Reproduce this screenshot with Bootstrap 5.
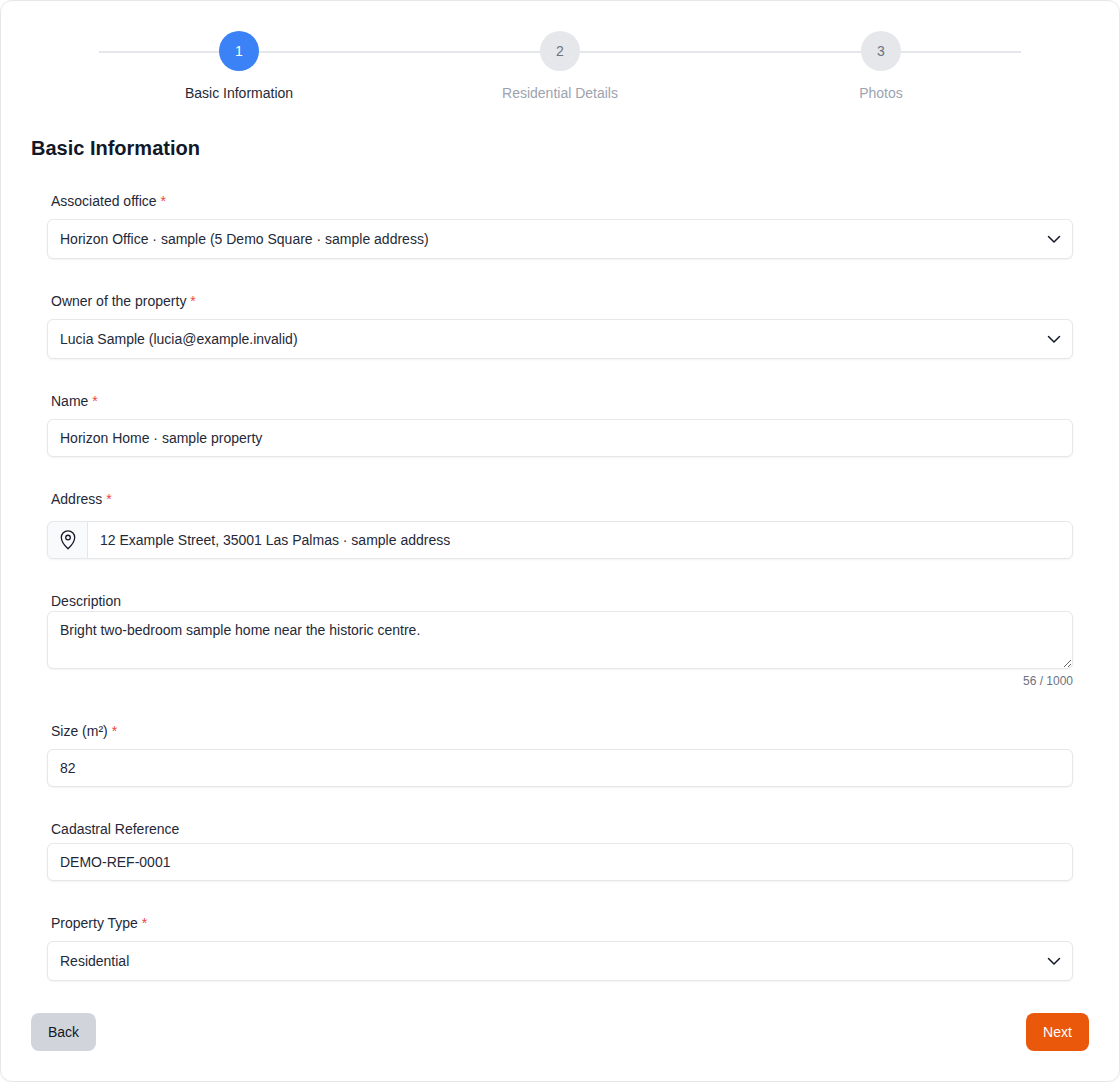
<!DOCTYPE html>
<html lang="en"><head><meta charset="utf-8">
<link href="https://cdn.jsdelivr.net/npm/bootstrap@5.3.0/dist/css/bootstrap.min.css" rel="stylesheet">
<script src="https://cdn.jsdelivr.net/npm/bootstrap@5.3.0/dist/js/bootstrap.bundle.min.js"></script>
<style>
body{background:#fff;font-family:"Liberation Sans",Arial,sans-serif;color:#111827;font-size:14px}
.shell{height:1082px;border:1px solid #e5e7eb;border-radius:12px;padding:30px 30px 30px;box-shadow:0 1px 2px rgba(0,0,0,.05)}
.stepper{position:relative;height:72px}
.stepline{position:absolute;left:68px;right:68px;top:20px;height:2px;background:#e5e7eb}
.stepcol{position:relative;width:321px}
.stepdot{width:40px;height:40px;border-radius:50%;background:#e5e7eb;color:#6b7280;font-size:14px}
.stepdot.active-dot{background:#3b82f6;color:#fff}
.steptxt{margin-top:12px;font-size:14px;line-height:20px;color:#9ca3af}
.steptxt.active-txt{color:#1f2937}
.ftitle{font-size:20px;font-weight:700;line-height:28px;margin:31px 0 29px;color:#111827}
.fbody{padding:0 16px;gap:32px}
.flabel{font-size:14px;line-height:20px;margin-left:4px;color:#1f2937;display:block}
.gap12{margin-bottom:12px}
.req{color:#ef4444}
.fctl{font-size:14px;height:38px;border-color:#e5e7eb;border-radius:6px;color:#1f2937;padding:8px 12px;line-height:20px;box-shadow:0 1px 2px rgba(0,0,0,.05)}
.fsel.form-select{height:40px;background-size:16px 16px;background-position:right 10px center;background-image:url("data:image/svg+xml,%3csvg xmlns='http://www.w3.org/2000/svg' viewBox='0 0 16 16'%3e%3cpath fill='none' stroke='%23111827' stroke-linecap='round' stroke-linejoin='round' stroke-width='1.5' d='m2.500 5.500 5.500 5.500 5.500-5.500'/%3e%3c/svg%3e")}
.fgroup{border-radius:6px;box-shadow:0 1px 2px rgba(0,0,0,.05)}
.fgroup .fctl{box-shadow:none}
.faddon{background:#f9fafb;border-color:#e5e7eb;padding:0;width:41px;height:38px;justify-content:center;border-radius:6px 0 0 6px}
.farea.form-control{height:58px;min-height:58px;resize:vertical}
.fcount{font-size:12px;line-height:16px;color:#6b7280;text-align:right;margin-top:4px}
.bbtn.btn{background:#d1d5db;border:0;color:#111827;font-size:14px;width:65px;height:38px;border-radius:8px;padding:0}
.nbtn.btn{background:#ea580c;border:0;color:#fff;font-size:14px;width:63px;height:38px;border-radius:8px;padding:0}
</style></head><body>
<div class="shell d-flex flex-column">
 <div class="stepper d-flex justify-content-center">
  <div class="stepline"></div>
  <div class="stepcol d-flex flex-column align-items-center"><div class="stepdot active-dot d-flex align-items-center justify-content-center">1</div><div class="steptxt active-txt">Basic Information</div></div>
  <div class="stepcol d-flex flex-column align-items-center"><div class="stepdot d-flex align-items-center justify-content-center">2</div><div class="steptxt">Residential Details</div></div>
  <div class="stepcol d-flex flex-column align-items-center"><div class="stepdot d-flex align-items-center justify-content-center">3</div><div class="steptxt">Photos</div></div>
 </div>
 <h2 class="ftitle">Basic Information</h2>
 <form class="fbody d-flex flex-column">
  <div>
   <label class="flabel mb-2">Associated office <span class="req">*</span></label>
   <select class="form-select fctl fsel"><option>Horizon Office · sample (5 Demo Square · sample address)</option></select>
  </div>
  <div>
   <label class="flabel mb-2">Owner of the property <span class="req">*</span></label>
   <select class="form-select fctl fsel"><option>Lucia Sample (lucia@example.invalid)</option></select>
  </div>
  <div>
   <label class="flabel mb-2">Name <span class="req">*</span></label>
   <input class="form-control fctl" value="Horizon Home · sample property">
  </div>
  <div>
   <label class="flabel gap12">Address <span class="req">*</span></label>
   <div class="input-group fgroup">
    <span class="input-group-text faddon"><svg width="22" height="22" viewBox="0 0 24 24" fill="none" stroke="#111827" stroke-width="1.4" stroke-linecap="round" stroke-linejoin="round"><path d="M12 21.500s-7.300-6.600-7.300-12.200a7.300 7.300 0 0 1 14.600 0C19.300 14.900 12 21.500 12 21.500z"/><circle cx="12" cy="9.300" r="2.500"/></svg></span>
    <input class="form-control fctl" value="12 Example Street, 35001 Las Palmas · sample address">
   </div>
  </div>
  <div>
   <label class="flabel mb-0">Description</label>
   <textarea class="form-control fctl farea">Bright two-bedroom sample home near the historic centre.</textarea>
   <div class="fcount">56 / 1000</div>
  </div>
  <div>
   <label class="flabel mb-2">Size (m²) <span class="req">*</span></label>
   <input class="form-control fctl" value="82">
  </div>
  <div>
   <label class="flabel mb-1">Cadastral Reference</label>
   <input class="form-control fctl" value="DEMO-REF-0001">
  </div>
  <div>
   <label class="flabel mb-2">Property Type <span class="req">*</span></label>
   <select class="form-select fctl fsel"><option>Residential</option></select>
  </div>
 </form>
 <div class="d-flex justify-content-between mt-auto">
  <button class="btn bbtn" type="button">Back</button>
  <button class="btn nbtn" type="button">Next</button>
 </div>
</div>
</body></html>
